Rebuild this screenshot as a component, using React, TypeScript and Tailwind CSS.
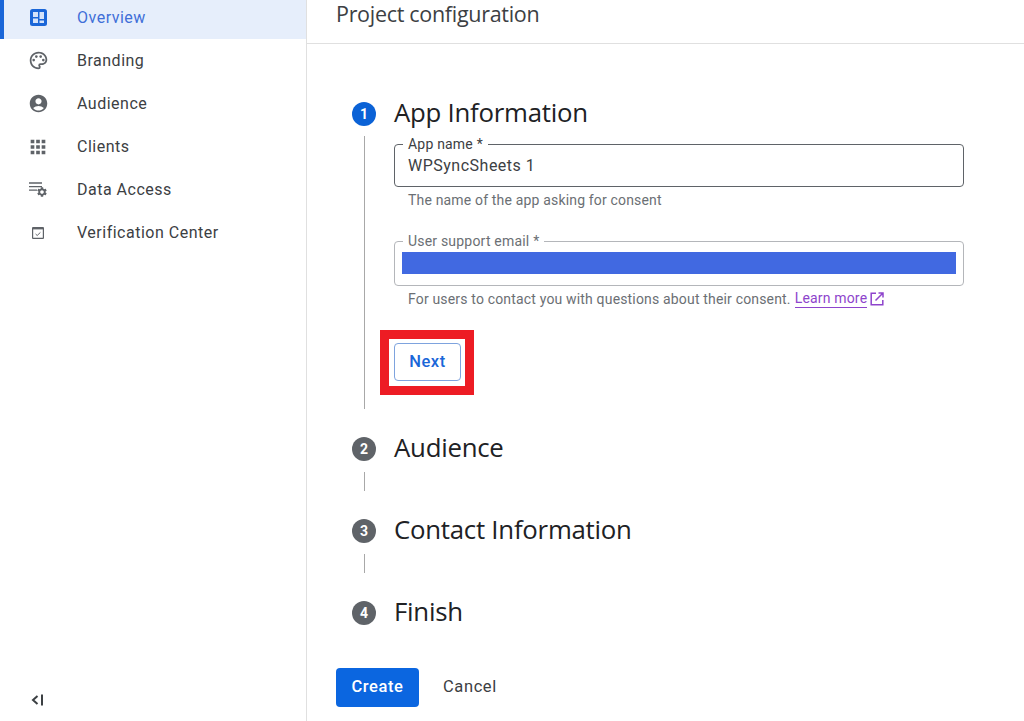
import { MdAccountCircle, MdApps, MdOutlinePalette, MdSettings } from "react-icons/md";

const NAV_ITEMS = [
  { label: "Branding", icon: <MdOutlinePalette size={21} /> },
  { label: "Audience", icon: <MdAccountCircle size={21} /> },
  { label: "Clients", icon: <MdApps size={22} /> },
  { label: "Data Access", icon: <DataAccessIcon /> },
  { label: "Verification Center", icon: <VerificationIcon /> },
];

const ROBOTO = "font-['Roboto',sans-serif]";

function OverviewIcon() {
  return (
    <svg width="17" height="17" viewBox="0 0 17 17">
      <rect width="17" height="17" rx="2.5" fill="#1a66d8" />
      <path d="M3 3h5v5H3zM3 9.5h5V14H3zM9.5 3H14v7H9.5zM9.5 11.5H14V14H9.5z" fill="#d5e3fa" />
    </svg>
  );
}

function DataAccessIcon() {
  return (
    <span className="relative block h-[15px] w-[18px] text-[#5f6368]">
      <svg width="18" height="15" viewBox="0 0 18 15">
        <path d="M0 1h13M0 4.6h13M0 8.2h8" stroke="currentColor" strokeWidth="1.3" fill="none" />
      </svg>
      <MdSettings size={12} className="absolute bottom-[-1px] right-[-1px]" />
    </span>
  );
}

function VerificationIcon() {
  return (
    <svg width="12" height="12" viewBox="0 0 12 12" fill="none" stroke="#5f6368">
      <rect x="0.6" y="0.6" width="10.8" height="10.8" rx="0.5" strokeWidth="1.2" />
      <path d="M0.6 1.6h10.8" strokeWidth="1.6" />
      <path d="M3.6 7l1.6 1.5L8.4 5.4" strokeWidth="1" />
    </svg>
  );
}

function CollapseIcon() {
  return (
    <svg width="13" height="12" viewBox="0 0 13 12" fill="none" stroke="#3c4043" strokeWidth="2">
      <path d="M6.5 2L2 6l4.5 4" />
      <path d="M11 0.5v11" />
    </svg>
  );
}

function ExternalIcon() {
  return (
    <svg width="14" height="14" viewBox="0 0 14 14" fill="none" stroke="#8e44cc" strokeWidth="1.5" className="ml-[3px]">
      <path d="M6 1.2H1.2v11.6h11.6V8" />
      <path d="M5.5 8.5l7-7M8.5 1h4.5v4.5" />
    </svg>
  );
}

function Sidebar() {
  return (
    <aside className="flex h-full w-[307px] shrink-0 flex-col border-r border-[#e0e0e0]">
      <div className="flex h-[39px] items-center border-l-[4px] border-[#1a66d8] bg-[#e6eefb] pb-[4px] text-[#3f6fd8]">
        <span className="mr-[5px] flex w-[68px] justify-center">
          <OverviewIcon />
        </span>
        <span className="text-[16px] tracking-[0.5px]">Overview</span>
      </div>
      {NAV_ITEMS.map((item) => (
        <div key={item.label} className="flex h-[43px] items-center pl-[4px] text-[#3c4043]">
          <span className="mr-[5px] flex w-[68px] justify-center text-[#5f6368]">{item.icon}</span>
          <span className="text-[16px] tracking-[0.5px]">{item.label}</span>
        </div>
      ))}
      <div className="mt-auto flex h-[43px] items-start pl-[31px] pt-[16px]">
        <CollapseIcon />
      </div>
    </aside>
  );
}

function StepBadge({ n, active }: { n: number; active?: boolean }) {
  return (
    <span
      className={`flex h-[24px] w-[24px] shrink-0 items-center justify-center rounded-full text-[14px] font-bold text-white ${
        active ? "bg-[#0b62d6]" : "bg-[#5f6368]"
      }`}
    >
      {n}
    </span>
  );
}

function Step({ n, title, active }: { n: number; title: string; active?: boolean }) {
  return (
    <div className="flex h-[34px] items-center gap-[18px]">
      <StepBadge n={n} active={active} />
      <h2 className="pb-[5px] font-['Open_Sans',sans-serif] text-[25.8px] leading-[34px] tracking-[-0.25px] text-[#202124]">{title}</h2>
    </div>
  );
}

function Field({ label, dark, height, children }: { label: string; dark?: boolean; height: string; children: React.ReactNode }) {
  return (
    <fieldset className={`rounded-[4px] border px-[7px] ${height} ${dark ? "border-[#5f6368]" : "border-[#b4b6ba]"}`}>
      <legend className={`ml-px px-[5px] text-[14px] leading-[14px] tracking-[0.2px] ${dark ? "text-[#3c4043]" : "text-[#6b6f74]"}`}>{label}</legend>
      {children}
    </fieldset>
  );
}

function Connector({ className }: { className: string }) {
  return <div className={`ml-[12px] w-px bg-[#a8a8a8] ${className}`} />;
}

export default function App() {
  return (
    <div className={`flex h-[721px] w-[1024px] overflow-hidden bg-white ${ROBOTO}`}>
      <Sidebar />
      <main className="flex min-w-0 flex-1 flex-col">
        <header className="flex h-[44px] shrink-0 items-start border-b border-[#e0e0e0] pl-[29px]">
          <h1 className="font-['Open_Sans',sans-serif] text-[21.5px] leading-[28px] tracking-[-0.3px] text-[#3c4043]">
            Project configuration
          </h1>
        </header>
        <div className="flex flex-col pl-[45px] pt-[53px]">
          <Step n={1} title="App Information" active />
          <div className="flex">
            <Connector className="mt-[5px] h-[273px]" />
            <div className="ml-[29px] w-[570px] pt-[6px]">
              <Field label="App name *" dark height="h-[50px]">
                <div className="pl-[6px] pt-[4px] text-[16px] leading-[22px] tracking-[0.5px] text-[#3c4043]">WPSyncSheets 1</div>
              </Field>
              <p className="mt-[4px] pl-[14px] text-[14px] leading-[18px] tracking-[0.17px] text-[#6b6f74]">The name of the app asking for consent</p>
              <div className="mt-[25px]">
                <Field label="User support email *" height="h-[52px]">
                  <div className="mt-[4px] h-[22px] bg-[#4169e1]" />
                </Field>
              </div>
              <p className="mt-[4px] flex items-center pl-[14px] text-[14px] leading-[18px] tracking-[0.17px] text-[#6b6f74]">
                For users to contact you with questions about their consent.
                <a className="ml-[4px] border-b border-[#8e44cc] leading-[17px] text-[#8e44cc]">Learn more</a>
                <ExternalIcon />
              </p>
              <div className="mt-[22px] -ml-[14px] w-fit border-[9px] border-[#ed1c24] pb-[5px] pl-[5px] pr-[4px] pt-[4px]">
                <button className="block h-[38px] w-[67px] rounded-[4px] border border-[#7ea3de] text-[16.5px] font-medium tracking-[0.6px] text-[#1a66d8]">
                  Next
                </button>
              </div>
            </div>
          </div>
          <div className="mt-[23px]">
            <Step n={2} title="Audience" />
          </div>
          <Connector className="mt-[6px] h-[19px]" />
          <div className="mt-[23px]">
            <Step n={3} title="Contact Information" />
          </div>
          <Connector className="mt-[6px] h-[19px]" />
          <div className="mt-[23px]">
            <Step n={4} title="Finish" />
          </div>
        </div>
        <div className="mt-[38px] flex items-center pl-[29px]">
          <button className="h-[39px] w-[83px] rounded-[4px] bg-[#0b66e0] text-[16.5px] font-medium tracking-[0.6px] text-white">Create</button>
          <button className="ml-[24px] text-[16.5px] tracking-[0.6px] text-[#3c4043]">Cancel</button>
        </div>
      </main>
    </div>
  );
}
